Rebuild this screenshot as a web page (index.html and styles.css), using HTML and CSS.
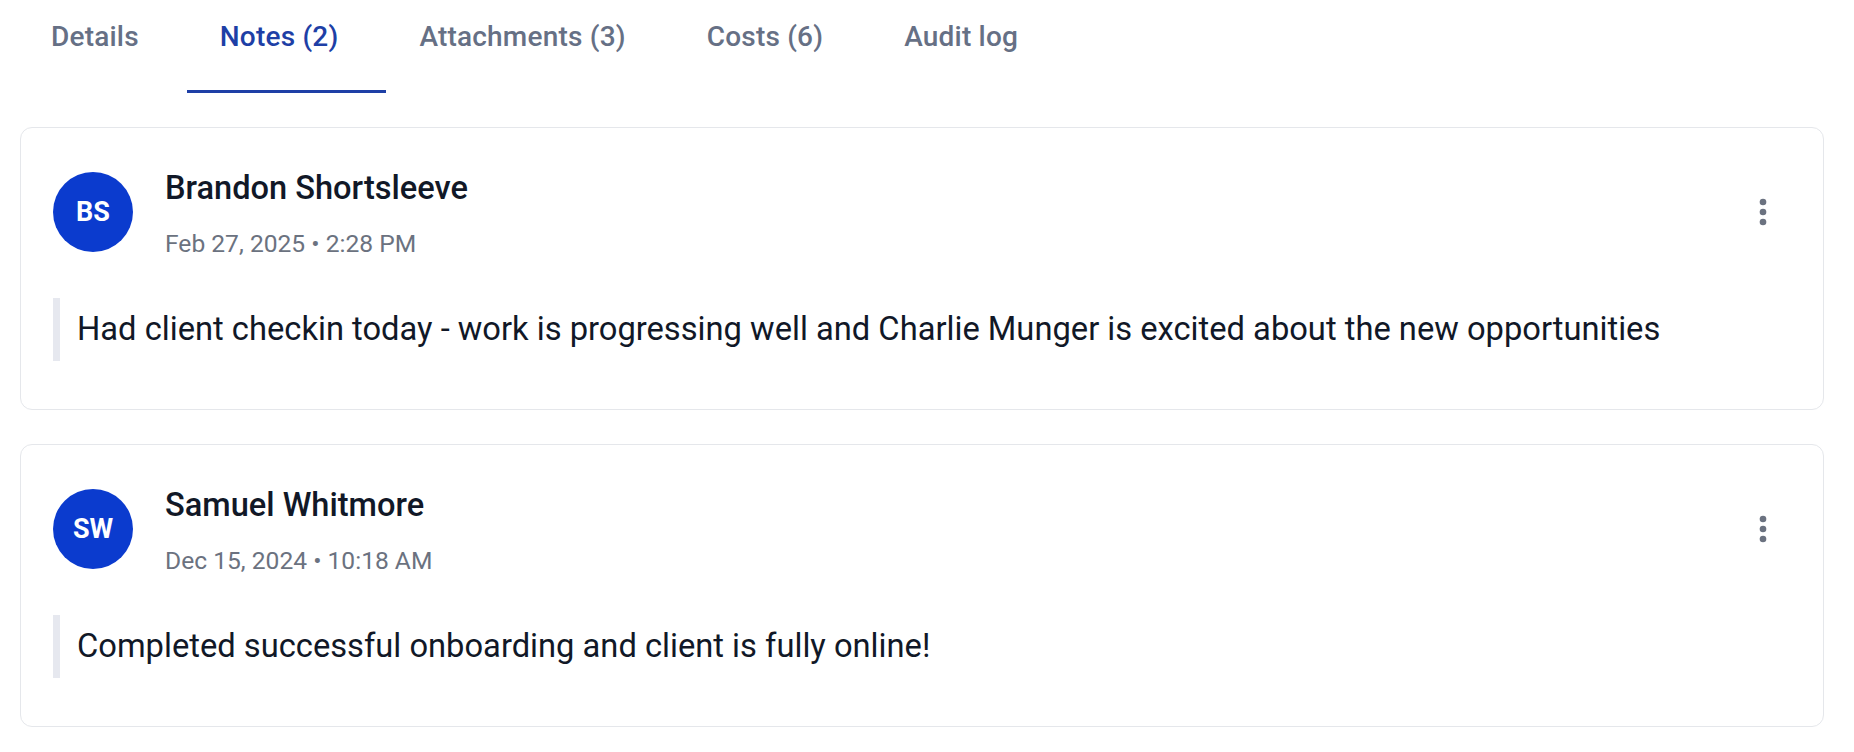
FILE: index.html
```html
<!DOCTYPE html>
<html lang="en">
<head>
<meta charset="utf-8">
<title>Notes</title>
<link rel="stylesheet" href="styles.css">
</head>
<body>
<nav class="tabs">
  <div class="tab">Details</div>
  <div class="tab active">Notes (2)</div>
  <div class="tab">Attachments (3)</div>
  <div class="tab">Costs (6)</div>
  <div class="tab">Audit log</div>
</nav>
<main class="notes">
  <article class="card">
    <header class="card-head">
      <div class="avatar">BS</div>
      <div class="meta">
        <div class="name">Brandon Shortsleeve</div>
        <div class="date">Feb 27, 2025 • 2:28 PM</div>
      </div>
      <button class="kebab" aria-label="More">
        <svg viewBox="0 0 24 24" width="40" height="40"><circle cx="12" cy="6" r="2"/><circle cx="12" cy="12" r="2"/><circle cx="12" cy="18" r="2"/></svg>
      </button>
    </header>
    <blockquote class="body">Had client checkin today - work is progressing well and Charlie Munger is excited about the new opportunities</blockquote>
  </article>
  <article class="card">
    <header class="card-head">
      <div class="avatar">SW</div>
      <div class="meta">
        <div class="name">Samuel Whitmore</div>
        <div class="date">Dec 15, 2024 • 10:18 AM</div>
      </div>
      <button class="kebab" aria-label="More">
        <svg viewBox="0 0 24 24" width="40" height="40"><circle cx="12" cy="6" r="2"/><circle cx="12" cy="12" r="2"/><circle cx="12" cy="18" r="2"/></svg>
      </button>
    </header>
    <blockquote class="body">Completed successful onboarding and client is fully online!</blockquote>
  </article>
</main>
</body>
</html>
```
FILE: styles.css
```css
* { box-sizing: border-box; }
html, body { margin: 0; padding: 0; background: #ffffff; }
body {
  font-family: Roboto, "Liberation Sans", Arial, sans-serif;
  color: #111827;
}
.tabs {
  display: flex;
  padding-left: 18px;
  height: 93px;
}
.tab {
  padding: 21px 48px 37px 33px;
  font-size: 28px;
  letter-spacing: 0.2px;
  line-height: 32px;
  font-weight: 500;
  color: #667085;
  border-bottom: 3px solid transparent;
  white-space: nowrap;
}
.tab.active {
  color: #1e3fa6;
  border-bottom-color: #1e3fa6;
}
.notes {
  display: flex;
  flex-direction: column;
  gap: 34px;
  margin: 34px 30px 0 20px;
}
.card {
  border: 1px solid #e5e7eb;
  border-radius: 12px;
  padding: 38px 32px 48px 32px;
  background: #fff;
}
.card-head {
  display: flex;
  align-items: flex-start;
  gap: 32px;
}
.avatar {
  margin-top: 6px;
  width: 80px;
  height: 80px;
  border-radius: 50%;
  background: #0b3bce;
  color: #fff;
  font-weight: 700;
  font-size: 27px;
  display: flex;
  align-items: center;
  justify-content: center;
  flex: none;
}
.meta {
  display: flex;
  flex-direction: column;
  gap: 20px;
  padding-top: 2px;
}
.name {
  font-size: 32.6px;
  line-height: 40px;
  font-weight: 500;
  color: #111827;
}
.date {
  font-size: 24.6px;
  line-height: 32px;
  color: #6b7280;
}
.kebab {
  margin-left: auto;
  margin-top: 18px;
  width: 56px;
  height: 56px;
  border: 0;
  padding: 0;
  background: transparent;
  display: flex;
  align-items: center;
  justify-content: center;
}
.kebab svg { fill: #6b7280; }
.body {
  margin: 38px 0 0 0;
  border-left: 7px solid #e6e8ef;
  padding: 8px 0 8px 17px;
  font-size: 32.7px;
  line-height: 47px;
  color: #111827;
}
```
